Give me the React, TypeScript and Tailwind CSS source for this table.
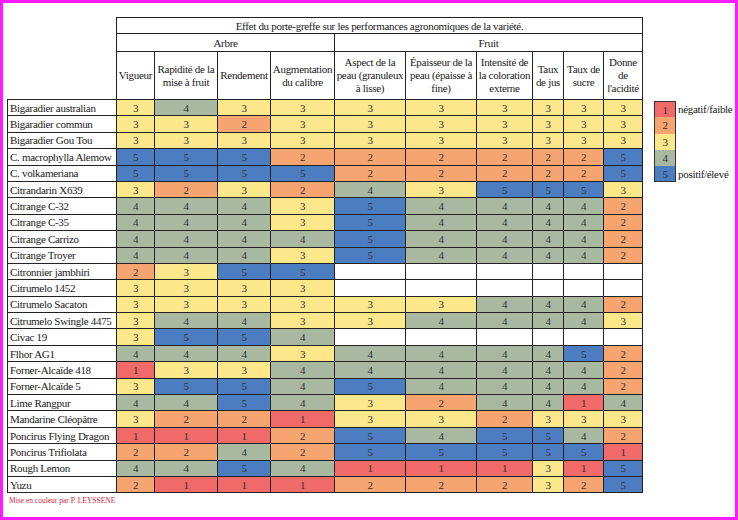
import React from "react";

const colors: Record<number, string> = {
  1: "bg-[#f06a6a]",
  2: "bg-[#f6a571]",
  3: "bg-[#fce78b]",
  4: "bg-[#a8b8a1]",
  5: "bg-[#4b7dc0]",
};

const rows: [string, number[]][] = [
  ["Bigaradier australian", [3, 4, 3, 3, 3, 3, 3, 3, 3, 3]],
  ["Bigaradier commun", [3, 3, 2, 3, 3, 3, 3, 3, 3, 3]],
  ["Bigaradier Gou Tou", [3, 3, 3, 3, 3, 3, 3, 3, 3, 3]],
  ["C. macrophylla Alemow", [5, 5, 5, 2, 2, 2, 2, 2, 2, 5]],
  ["C. volkameriana", [5, 5, 5, 5, 2, 2, 2, 2, 2, 5]],
  ["Citrandarin X639", [3, 2, 3, 2, 4, 3, 5, 5, 5, 3]],
  ["Citrange C-32", [4, 4, 4, 3, 5, 4, 4, 4, 4, 2]],
  ["Citrange C-35", [4, 4, 4, 3, 5, 4, 4, 4, 4, 2]],
  ["Citrange Carrizo", [4, 4, 4, 4, 5, 4, 4, 4, 4, 2]],
  ["Citrange Troyer", [4, 4, 4, 3, 5, 4, 4, 4, 4, 2]],
  ["Citronnier jambhiri", [2, 3, 5, 5]],
  ["Citrumelo 1452", [3, 3, 3, 3]],
  ["Citrumelo Sacaton", [3, 3, 3, 3, 3, 3, 4, 4, 4, 2]],
  ["Citrumelo Swingle 4475", [3, 4, 4, 3, 3, 4, 4, 4, 4, 3]],
  ["Civac 19", [3, 5, 5, 4]],
  ["Flhor AG1", [4, 4, 4, 3, 4, 4, 4, 4, 5, 2]],
  ["Forner-Alcaïde 418", [1, 3, 3, 4, 4, 4, 4, 4, 4, 2]],
  ["Forner-Alcaïde 5", [3, 5, 5, 4, 5, 4, 4, 4, 4, 2]],
  ["Lime Rangpur", [4, 4, 5, 4, 3, 2, 4, 4, 1, 4]],
  ["Mandarine Cléopâtre", [3, 2, 2, 1, 3, 3, 2, 3, 3, 3]],
  ["Poncirus Flying Dragon", [1, 1, 1, 2, 5, 4, 5, 5, 4, 2]],
  ["Poncirus Trifiolata", [2, 2, 4, 2, 5, 5, 5, 5, 5, 1]],
  ["Rough Lemon", [4, 4, 5, 4, 1, 1, 1, 3, 1, 5]],
  ["Yuzu", [2, 1, 1, 1, 2, 2, 2, 3, 2, 5]],
];

const headers: React.ReactNode[] = [
  "Vigueur",
  <>Rapidité de la<br />mise à fruit</>,
  "Rendement",
  <>Augmentation<br />du calibre</>,
  <>Aspect de la<br />peau (granuleux<br />à lisse)</>,
  <>Épaisseur de la<br />peau (épaisse à<br />fine)</>,
  <>Intensité de<br />la coloration<br />externe</>,
  <>Taux<br />de jus</>,
  <>Taux de<br />sucre</>,
  <>Donne<br />de<br />l'acidité</>,
];

const widths = ["w-[38px]", "w-[63px]", "w-[53px]", "w-[64px]", "w-[71px]", "w-[71px]", "w-[56px]", "w-[31px]", "w-[40px]", "w-[39px]"];

const legend: [number, string][] = [
  [1, "négatif/faible"],
  [2, ""],
  [3, ""],
  [4, ""],
  [5, "positif/élevé"],
];

export default function App() {
  return (
    <div className="w-[738px] h-[520px] border-[3px] border-[#ff1aff] bg-white flex flex-col text-[#1a1a1a] font-['Liberation_Serif','Times_New_Roman',serif]">
      <div className="flex pl-[4px] pt-[14px]">
        <table className="table-fixed border-collapse text-[11px] tracking-[-0.3px] leading-[12px] font-['Liberation_Serif',serif]">
          <colgroup>
            <col className="w-[109px]" />
            {widths.map((w, i) => (
              <col key={i} className={w} />
            ))}
          </colgroup>
          <thead>
            <tr className="h-[16px]">
              <th />
              <th colSpan={10} className="border border-[#222] font-normal text-center">
                Effet du porte-greffe sur les performances agronomiques de la variété.
              </th>
            </tr>
            <tr className="h-[18px]">
              <th />
              <th colSpan={4} className="border border-[#222] font-normal text-center">
                Arbre
              </th>
              <th colSpan={6} className="border border-[#222] font-normal text-center">
                Fruit
              </th>
            </tr>
            <tr className="h-[48px]">
              <th />
              {headers.map((h, i) => (
                <th key={i} className="border border-[#222] font-normal text-center leading-[13px] px-0">
                  {h}
                </th>
              ))}
            </tr>
          </thead>
          <tbody>
            {rows.map(([name, vals]) => (
              <tr key={name} className="h-[16.4px]">
                <td className="border border-[#222] pl-[2px] text-left whitespace-nowrap">{name}</td>
                {Array.from({ length: 10 }).map((_, i) => {
                  const v = vals[i];
                  return (
                    <td
                      key={i}
                      className={`border border-[#222] text-center text-[#333] ${v ? colors[v] : "bg-white"}`}
                    >
                      {v ?? ""}
                    </td>
                  );
                })}
              </tr>
            ))}
          </tbody>
        </table>

        {/* Légende */}
        <div className="ml-[11px] mt-[84px] flex flex-col text-[11px] tracking-[-0.3px]">
          {legend.map(([v, label]) => (
            <div key={v} className="flex items-center h-[16.3px]">
              <div
                className={`w-[22px] h-full border-x border-[#333] ${v === 1 ? "border-t" : ""} ${v === 5 ? "border-b" : ""} ${colors[v]} text-center text-[#333] leading-[16px]`}
              >
                {v}
              </div>
              <span className="ml-[2px]">{label}</span>
            </div>
          ))}
        </div>
      </div>

      <p className="mt-[2px] pl-[6px] text-[7.5px] text-[#c8283c]">
        Mise en couleur par P. LEYSSENE
      </p>
    </div>
  );
}
